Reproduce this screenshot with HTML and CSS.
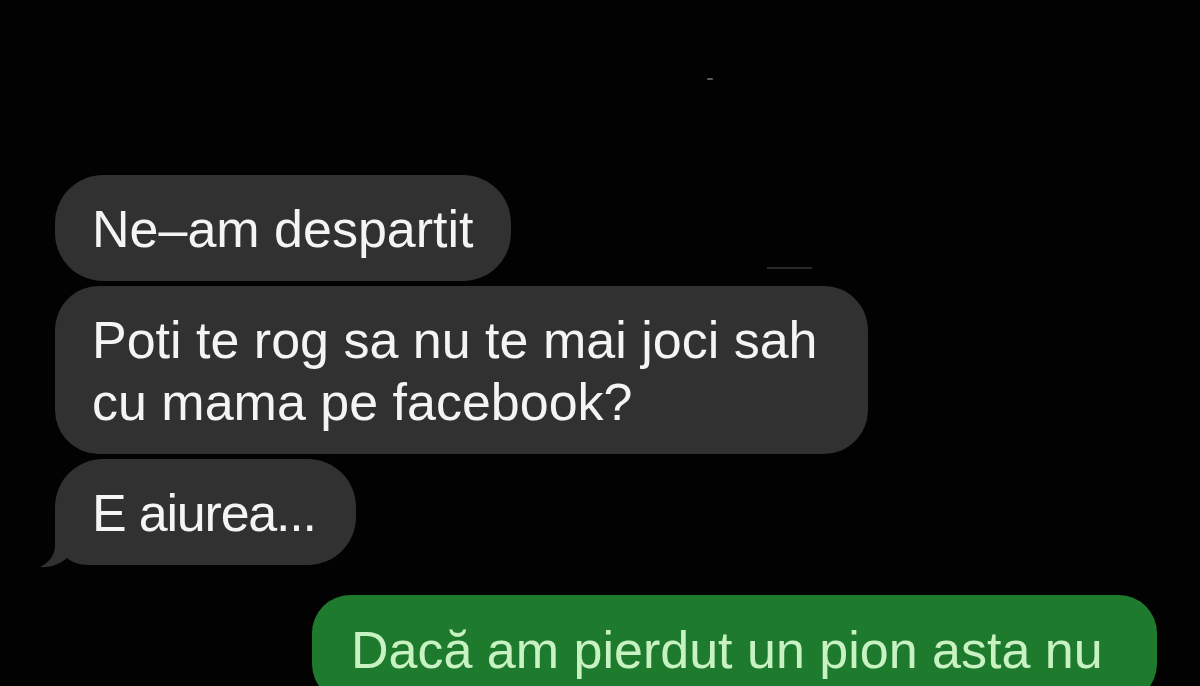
FILE: index.html
```html
<!DOCTYPE html>
<html lang="ro">
<head>
<meta charset="utf-8">
<title>Chat</title>
<link rel="stylesheet" href="styles.css">
</head>
<body>
<div class="screen">
  <span class="speck speck-dot"></span>
  <span class="speck speck-line"></span>
  <div class="chat">
    <div class="bubble in">Ne–am despartit</div>
    <div class="bubble in in-wide">Poti te rog sa nu te mai joci sah<br>cu mama pe facebook?</div>
    <div class="bubble in in-last">E aiurea...
      <svg class="tail" width="70" height="50" viewBox="0 0 70 50" aria-hidden="true"><path d="M17 0 L17 25 C17 36 10 43 2 47 C12 48 22 44 29 38 C34 42 40 45 52 45 L68 45 L68 0 Z" fill="#313131"/></svg>
    </div>
    <div class="bubble out">Dacă am pierdut un pion asta nu</div>
  </div>
</div>
</body>
</html>
```

FILE: styles.css
```css
html, body {
  margin: 0;
  padding: 0;
  background: #000;
}

.screen {
  position: relative;
  width: 1200px;
  height: 686px;
  overflow: hidden;
  background: #020202;
}

.chat {
  display: flex;
  flex-direction: column;
  align-items: flex-start;
  gap: 5px;
  padding: 175px 43px 0 55px;
}

.bubble {
  position: relative;
  isolation: isolate;
  font-family: "Liberation Sans", Arial, sans-serif;
  font-size: 52px;
  line-height: 62px;
  padding: 23px 37px 21px 37px;
  border-radius: 48px;
  white-space: nowrap;
}

.in {
  background: #313131;
  color: #f4f4f4;
}

.in-wide {
  padding-right: 50px;
  border-radius: 44px;
}

.in-last {
  padding-right: 40px;
  letter-spacing: -1.2px;
}

.tail {
  position: absolute;
  left: -17px;
  bottom: -5px;
  z-index: -1;
}

.out {
  align-self: flex-end;
  margin-top: 25px;
  width: 754px;
  padding: 24px 52px 21px 39px;
  border-radius: 38px;
  background: #1e7b2e;
  color: #c8f2c2;
}

.speck {
  position: absolute;
  background: #5a5a5a;
}

.speck-dot {
  left: 707px;
  top: 78px;
  width: 6px;
  height: 2px;
  border-radius: 1px;
}

.speck-line {
  left: 767px;
  top: 267px;
  width: 45px;
  height: 2px;
  background: #2a2a2a;
}
```
